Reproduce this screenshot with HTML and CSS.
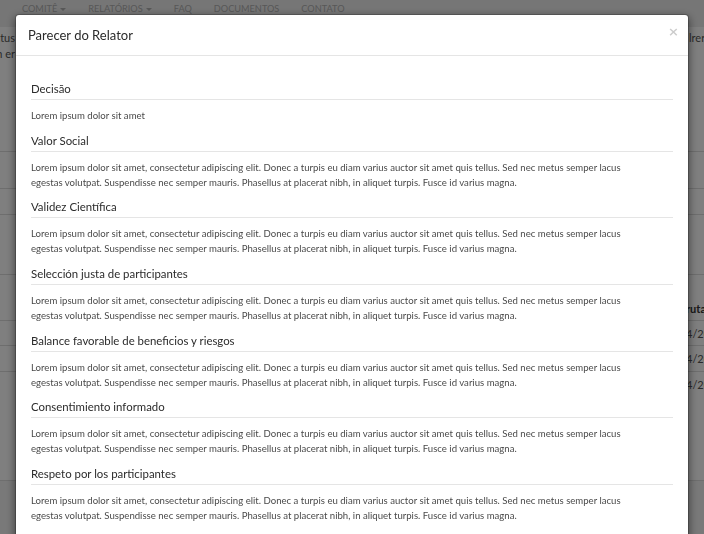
FILE: index.html
```html
<!DOCTYPE html>
<html lang="pt">
<head>
<meta charset="utf-8">
<title>Parecer do Relator</title>
<link rel="stylesheet" href="styles.css">
</head>
<body>
<div class="page">
  <nav class="navbar">
    <ul class="nav">
      <li>Comitê <span class="caret"></span></li>
      <li>Relatórios <span class="caret"></span></li>
      <li>FAQ</li>
      <li>Documentos</li>
      <li>Contato</li>
    </ul>
  </nav>
  <div class="intro">
    <p class="intro-line"><span class="frag-left">ctus</span><span class="frag-right">lrerit ipsum</span></p>
    <p class="intro-line"><span class="frag-left">n er</span></p>
  </div>
  <div class="band band-a"></div>
  <div class="band band-b"></div>
  <div class="band band-c"></div>
  <table class="grid">
    <thead><tr><th class="c1">Projeto</th><th class="c2">rutas</th></tr></thead>
    <tbody>
      <tr><td class="c1">Projeto 1</td><td class="c2">4/2018</td></tr>
      <tr><td class="c1">Projeto 2</td><td class="c2">4/2018</td></tr>
      <tr><td class="c1">Projeto 3</td><td class="c2">4/2018</td></tr>
    </tbody>
  </table>
  <div class="band band-d"></div>
</div>

<div class="backdrop"></div>
<div class="modal-wrap">
  <div class="modal">
    <div class="modal-header">
      <h3 class="modal-title">Parecer do Relator</h3>
      <button class="close" type="button" aria-label="Fechar">×</button>
    </div>
    <div class="modal-body">
      <section class="item">
        <h4>Decisão</h4>
        <p>Lorem ipsum dolor sit amet</p>
      </section>
      <section class="item">
        <h4>Valor Social</h4>
        <p>Lorem ipsum dolor sit amet, consectetur adipiscing elit. Donec a turpis eu diam varius auctor sit amet quis tellus. Sed nec metus semper lacus egestas volutpat. Suspendisse nec semper mauris. Phasellus at placerat nibh, in aliquet turpis. Fusce id varius magna.</p>
      </section>
      <section class="item">
        <h4>Validez Científica</h4>
        <p>Lorem ipsum dolor sit amet, consectetur adipiscing elit. Donec a turpis eu diam varius auctor sit amet quis tellus. Sed nec metus semper lacus egestas volutpat. Suspendisse nec semper mauris. Phasellus at placerat nibh, in aliquet turpis. Fusce id varius magna.</p>
      </section>
      <section class="item">
        <h4>Selección justa de participantes</h4>
        <p>Lorem ipsum dolor sit amet, consectetur adipiscing elit. Donec a turpis eu diam varius auctor sit amet quis tellus. Sed nec metus semper lacus egestas volutpat. Suspendisse nec semper mauris. Phasellus at placerat nibh, in aliquet turpis. Fusce id varius magna.</p>
      </section>
      <section class="item">
        <h4>Balance favorable de beneficios y riesgos</h4>
        <p>Lorem ipsum dolor sit amet, consectetur adipiscing elit. Donec a turpis eu diam varius auctor sit amet quis tellus. Sed nec metus semper lacus egestas volutpat. Suspendisse nec semper mauris. Phasellus at placerat nibh, in aliquet turpis. Fusce id varius magna.</p>
      </section>
      <section class="item">
        <h4>Consentimiento informado</h4>
        <p>Lorem ipsum dolor sit amet, consectetur adipiscing elit. Donec a turpis eu diam varius auctor sit amet quis tellus. Sed nec metus semper lacus egestas volutpat. Suspendisse nec semper mauris. Phasellus at placerat nibh, in aliquet turpis. Fusce id varius magna.</p>
      </section>
      <section class="item">
        <h4>Respeto por los participantes</h4>
        <p>Lorem ipsum dolor sit amet, consectetur adipiscing elit. Donec a turpis eu diam varius auctor sit amet quis tellus. Sed nec metus semper lacus egestas volutpat. Suspendisse nec semper mauris. Phasellus at placerat nibh, in aliquet turpis. Fusce id varius magna.</p>
      </section>
    </div>
  </div>
</div>
</body>
</html>
```
FILE: styles.css
```css
html, body {
  margin: 0;
  padding: 0;
  height: 100%;
  overflow: hidden;
}
body {
  font-family: Lato, "Noto Sans", sans-serif;
  background: #fff;
  color: #333;
}

/* ---------- background page ---------- */
.page {
  width: 704px;
}
.navbar {
  height: 27px;
  background: #ececec;
}
.nav {
  list-style: none;
  margin: 0;
  padding: 3px 0 0 22px;
  display: flex;
  gap: 22px;
  font-size: 9.2px;
  line-height: 12px;
  text-transform: uppercase;
  color: #b0b0b0;
}
.nav li {
  display: flex;
  align-items: center;
  gap: 3px;
}
.caret {
  width: 0;
  height: 0;
  border-left: 3px solid transparent;
  border-right: 3px solid transparent;
  border-top: 3px solid #b0b0b0;
}
.intro {
  height: 124px;
  padding-top: 3px;
  box-sizing: border-box;
}
.intro-line {
  display: flex;
  justify-content: space-between;
  margin: 0;
  height: 16px;
  font-size: 11px;
  line-height: 16px;
  color: #555;
  white-space: nowrap;
}
.frag-left {
  width: 15px;
  overflow: hidden;
  direction: rtl;
}
.frag-right {
  width: 15px;
  overflow: hidden;
}
.band {
  border-top: 1px solid #dcdcdc;
}
.band-a { height: 36px; }
.band-b { height: 25px; }
.band-c { height: 59px; }
.grid {
  width: 704px;
  table-layout: fixed;
  border-collapse: collapse;
  border-top: 1px solid #dcdcdc;
  font-size: 11px;
  color: #555;
}
.grid th {
  height: 46px;
  box-sizing: border-box;
  vertical-align: bottom;
  padding: 0 0 5px;
  text-align: left;
  font-weight: 700;
  color: #333;
}
.grid td {
  height: 25px;
  box-sizing: border-box;
  padding: 0;
  border-top: 1px solid #dcdcdc;
}
.grid tbody tr:nth-child(2) td { height: 26px; }
.grid .c1 { width: 686px; padding-left: 20px; box-sizing: border-box; }
.grid .c2 { width: 18px; white-space: nowrap; overflow: hidden; }
.band-d {
  margin-top: 83px;
  height: 60px;
  background: #f2f2f2;
}

/* ---------- modal ---------- */
.backdrop {
  position: fixed;
  inset: 0;
  background: rgba(0, 0, 0, 0.5);
}
.modal-wrap {
  position: fixed;
  inset: 0;
  overflow: hidden;
}
.modal {
  position: absolute;
  top: 14px;
  left: 15px;
  width: 674px;
  box-sizing: border-box;
  background: #fff;
  border: 1px solid rgba(0, 0, 0, 0.2);
  border-radius: 4px;
  box-shadow: 0 3px 9px rgba(0, 0, 0, 0.5);
  background-clip: padding-box;
}
.modal-header {
  display: flex;
  justify-content: space-between;
  align-items: flex-start;
  padding: 10px 12px 10px 12px;
  border-bottom: 1px solid #e5e5e5;
}
.modal-title {
  margin: 0;
  font-size: 13px;
  line-height: 20px;
  font-weight: 400;
  color: #2b2b2b;
}
.close {
  margin: 2px -3px 0 0;
  padding: 0;
  border: 0;
  background: transparent;
  font-family: "DejaVu Sans", sans-serif;
  font-size: 13px;
  line-height: 10px;
  font-weight: 700;
  color: #000;
  opacity: 0.2;
  cursor: pointer;
}
.modal-body {
  padding: 15px 15px 16px;
}
.item h4 {
  margin: 9.7px 0 0;
  padding-bottom: 2px;
  border-bottom: 1px solid #e5e5e5;
  font-size: 11.4px;
  line-height: 16px;
  font-weight: 400;
  color: #2b2b2b;
}
.item:first-child h4 {
  margin-top: 10px;
}
.item p {
  margin: 8px 0 0;
  max-width: 614px;
  font-size: 9.6px;
  line-height: 15px;
  color: #4a4a4a;
}
```
